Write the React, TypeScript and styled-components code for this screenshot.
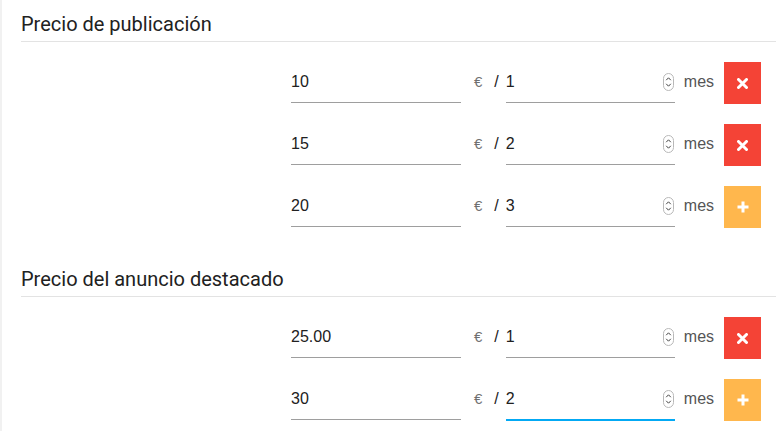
import React from 'react';
import styled, { createGlobalStyle } from 'styled-components';

const GlobalStyle = createGlobalStyle`
  html, body {
    margin: 0;
    padding: 0;
    background: #fff;
  }
  body {
    font-family: "Liberation Sans", Arial, sans-serif;
  }
`;

const Page = styled.div`
  width: 776px;
  height: 431px;
  overflow: hidden;
  box-sizing: border-box;
  border-left: 2px solid #f1f1f1;
  padding-left: 19px;
`;

const Section = styled.section`
  & + & {
    margin-top: 27px;
  }
`;

const Heading = styled.h2`
  margin: 0;
  padding: 12px 0 5px;
  font-family: Roboto, "Liberation Sans", sans-serif;
  font-size: 20px;
  font-weight: 400;
  line-height: 24px;
  color: #212121;
  border-bottom: 1px solid #e3e3e3;
`;

const Row = styled.div`
  display: flex;
  align-items: flex-start;
  height: 62px;
  padding: 20px 0 0 270px;
  box-sizing: border-box;
`;

const Field = styled.div<{ $width: number; $focused?: boolean }>`
  display: flex;
  align-items: center;
  flex-shrink: 0;
  width: ${p => p.$width}px;
  height: 41px;
  box-sizing: border-box;
  border-bottom: 1px solid ${p => (p.$focused ? '#03a9f4' : '#9e9e9e')};
  box-shadow: ${p => (p.$focused ? '0 1px 0 0 #03a9f4' : 'none')};
`;

const Input = styled.input`
  flex: 1;
  min-width: 0;
  border: none;
  outline: none;
  background: transparent;
  padding: 0;
  margin: 0;
  font-family: "Liberation Sans", Arial, sans-serif;
  font-size: 16px;
  color: #212121;
  height: 40px;
`;

const Euro = styled.span`
  margin-left: 13px;
  line-height: 40px;
  font-size: 15px;
  color: #6f6f6f;
`;

const Slash = styled.span`
  margin-left: 12px;
  margin-right: 7px;
  line-height: 40px;
  font-size: 16px;
  color: #212121;
`;

const Unit = styled.span`
  margin-left: 9px;
  line-height: 40px;
  font-size: 16px;
  color: #555;
`;

const ActionButton = styled.button<{ $variant: 'remove' | 'add' }>`
  margin-left: 10px;
  flex-shrink: 0;
  width: 37px;
  height: 42px;
  border: none;
  padding: 0;
  display: flex;
  align-items: center;
  justify-content: center;
  background: ${p => (p.$variant === 'remove' ? '#f44336' : '#ffb74d')};
  cursor: pointer;
`;

const SpinnerIcon = () => (
  <svg width="11" height="18" viewBox="0 0 11 18" style={{ marginRight: 1, flexShrink: 0 }}>
    <rect x="0.5" y="0.5" width="10" height="17" rx="5" fill="#fff" stroke="#b8b8b8" />
    <path d="M3.2 7.2 L5.5 4.8 L7.8 7.2" fill="none" stroke="#444" strokeWidth="1" />
    <path d="M3.2 10.8 L5.5 13.2 L7.8 10.8" fill="none" stroke="#444" strokeWidth="1" />
  </svg>
);

const TimesIcon = () => (
  <svg width="11" height="11" viewBox="0 0 11 11">
    <path d="M1.5 1.5 L9.5 9.5 M9.5 1.5 L1.5 9.5" stroke="#fff" strokeWidth="3" strokeLinecap="round" />
  </svg>
);

const PlusIcon = () => (
  <svg width="12" height="12" viewBox="0 0 12 12">
    <path d="M6 0.5 V11.5 M0.5 6 H11.5" stroke="#fff" strokeWidth="3" />
  </svg>
);

type PriceRow = { price: string; months: string; action: 'remove' | 'add'; focused?: boolean };

const PriceLine = ({ row }: { row: PriceRow }) => (
  <Row>
    <Field $width={170}>
      <Input defaultValue={row.price} readOnly />
    </Field>
    <Euro>€</Euro>
    <Slash>/</Slash>
    <Field $width={169} $focused={row.focused}>
      <Input defaultValue={row.months} readOnly />
      <SpinnerIcon />
    </Field>
    <Unit>mes</Unit>
    <ActionButton $variant={row.action}>
      {row.action === 'remove' ? <TimesIcon /> : <PlusIcon />}
    </ActionButton>
  </Row>
);

const publication: PriceRow[] = [
  { price: '10', months: '1', action: 'remove' },
  { price: '15', months: '2', action: 'remove' },
  { price: '20', months: '3', action: 'add' },
];

const featured: PriceRow[] = [
  { price: '25.00', months: '1', action: 'remove' },
  { price: '30', months: '2', action: 'add', focused: true },
];

export default function App() {
  return (
    <>
      <GlobalStyle />
      <Page>
        <Section>
          <Heading>Precio de publicación</Heading>
          {publication.map((r, i) => (
            <PriceLine key={i} row={r} />
          ))}
        </Section>
        <Section>
          <Heading>Precio del anuncio destacado</Heading>
          {featured.map((r, i) => (
            <PriceLine key={i} row={r} />
          ))}
        </Section>
      </Page>
    </>
  );
}
